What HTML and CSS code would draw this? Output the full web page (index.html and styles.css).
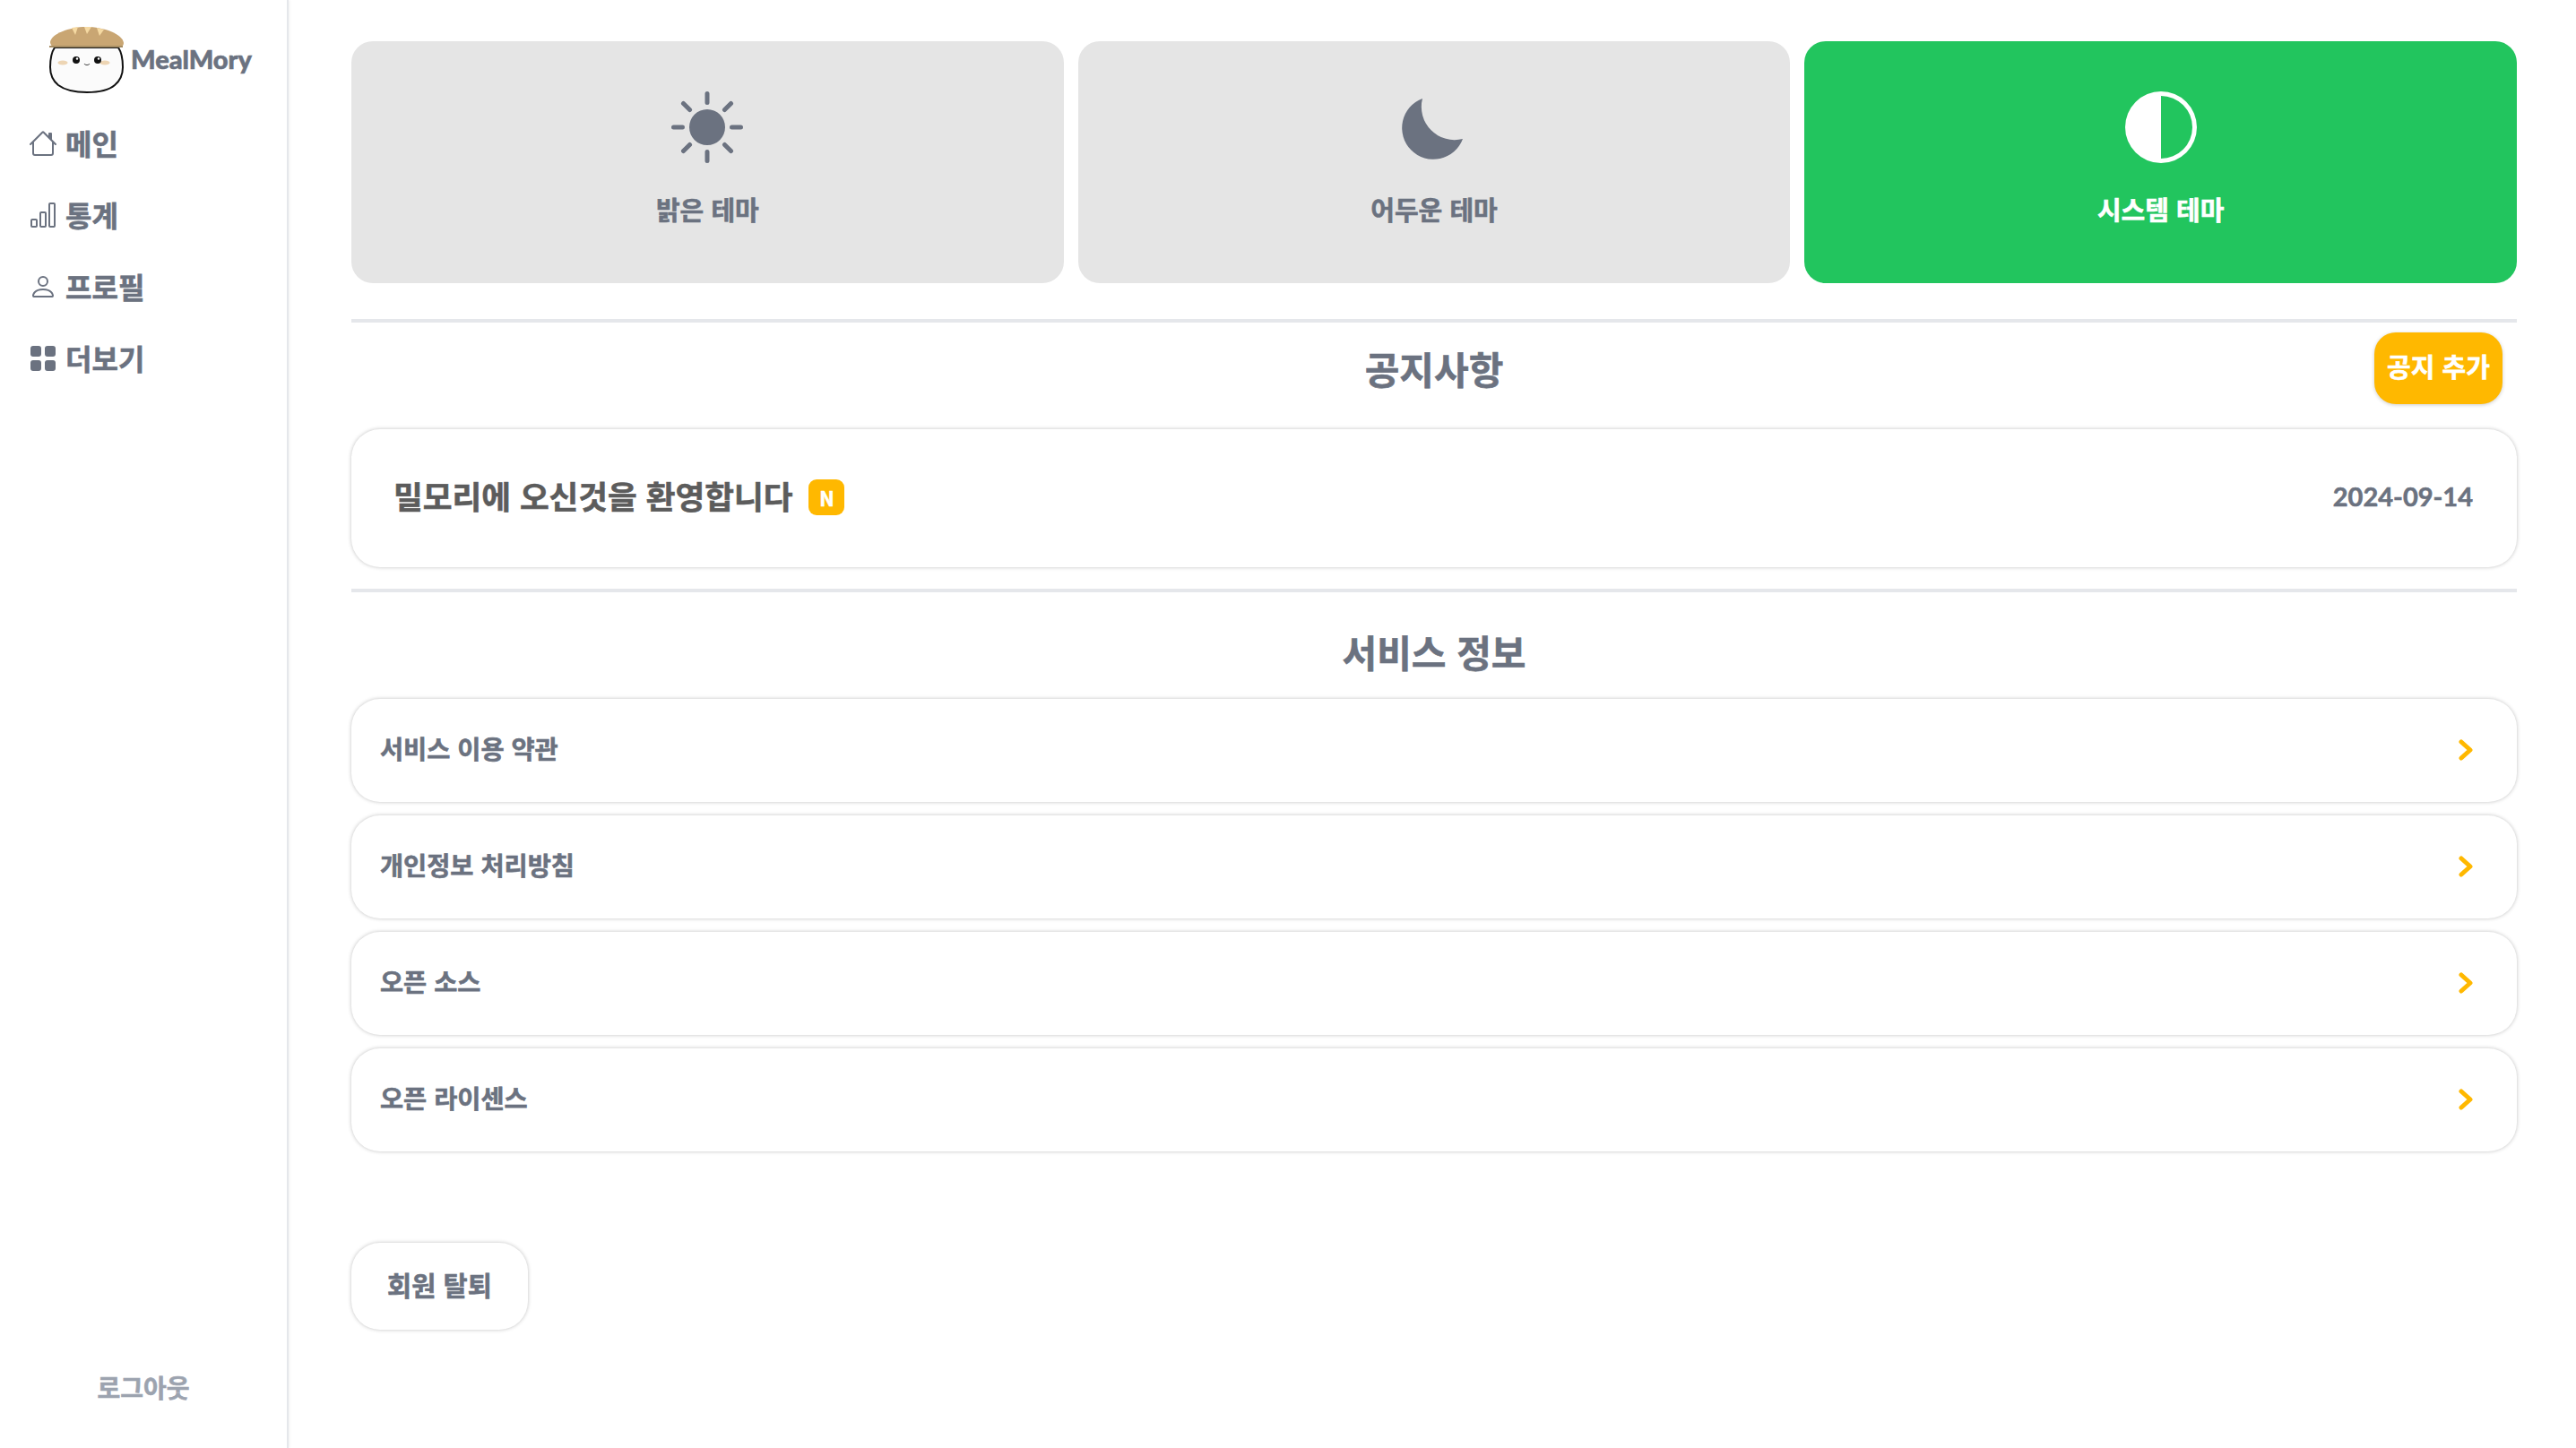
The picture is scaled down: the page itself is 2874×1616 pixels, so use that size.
FILE: index.html
```html
<!DOCTYPE html>
<html lang="ko">
<head>
    <meta charset="utf-8">
    <title>MealMory</title>
    <link rel="stylesheet" href="styles.css">
</head>
<body>
    <div class="app">
        <aside class="sidebar">
            <div class="logo">
                <svg class="logo-img" viewBox="0 0 84 76">
                    <path d="M6 24C2 30 1 36 1 46c0 8 3 15 9 20 8 6 20 8 32 8s24-2 31-8c6-5 9-12 9-20 0-10-1-16-5-22z" fill="#fbfbfb" stroke="#111" stroke-width="2"/>
                    <path d="M1 18C2 9 22 1 41 1c20 0 41 8 42 18 0 3-2 4-5 5H6c-3-1-5-3-5-6z" fill="#c9a673"/>
                    <path d="M25 2l4 8 3-9zM39 1l3 8 5-8zM53 2l3 9 5-7z" fill="#f5d9a2"/>
                    <rect x="0" y="22" width="82" height="2" fill="#a58c62"/>
                    <ellipse cx="15" cy="41" rx="5.5" ry="2.5" fill="#edd5b4"/>
                    <ellipse cx="62" cy="41" rx="5.5" ry="2.5" fill="#edd5b4"/>
                    <circle cx="30" cy="38" r="4" fill="#111"/>
                    <circle cx="54" cy="38" r="4" fill="#111"/>
                    <circle cx="31" cy="36.500" r="1.200" fill="#fff"/>
                    <circle cx="55" cy="36.500" r="1.200" fill="#fff"/>
                    <path d="M39 42c1 2 5 2 6 0" fill="none" stroke="#333" stroke-width="1"/>
                </svg>
                <span class="logo-text">MealMory</span>
            </div>
            <nav class="nav">
                <a class="nav-item">
                    <svg class="nav-icon" viewBox="0 0 16 16"><path d="M8.707 1.5a1 1 0 0 0-1.414 0L.646 8.146a.5.5 0 0 0 .708.708L2 8.207V13.5A1.5 1.5 0 0 0 3.5 15h9a1.500 1.500 0 0 0 1.500-1.500V8.207l.646.647a.5.5 0 0 0 .708-.708L13 5.793V2.500a.5.5 0 0 0-.5-.5h-1a.5.5 0 0 0-.5.5v1.293zM13 7.207V13.500a.5.5 0 0 1-.5.5h-9a.5.5 0 0 1-.5-.5V7.207l5-5z"/></svg>
                    <span class="nav-label">메인</span>
                </a>
                <a class="nav-item">
                    <svg class="nav-icon" viewBox="0 0 16 16"><path d="M4 11H2v3h2zm5-4H7v7h2zm5-5v12h-2V2zm-2-1a1 1 0 0 0-1 1v12a1 1 0 0 0 1 1h2a1 1 0 0 0 1-1V2a1 1 0 0 0-1-1zM6 7a1 1 0 0 1 1-1h2a1 1 0 0 1 1 1v7a1 1 0 0 1-1 1H7a1 1 0 0 1-1-1zm-5 4a1 1 0 0 1 1-1h2a1 1 0 0 1 1 1v3a1 1 0 0 1-1 1H2a1 1 0 0 1-1-1z"/></svg>
                    <span class="nav-label">통계</span>
                </a>
                <a class="nav-item">
                    <svg class="nav-icon" viewBox="0 0 16 16"><path d="M8 8a3 3 0 1 0 0-6 3 3 0 0 0 0 6m2-3a2 2 0 1 1-4 0 2 2 0 0 1 4 0m4 8c0 1-1 1-1 1H3s-1 0-1-1 1-4 6-4 6 3 6 4m-1-.004c-.001-.246-.154-.986-.832-1.664C11.516 10.68 10.289 10 8 10s-3.516.68-4.168 1.332c-.678.678-.83 1.418-.832 1.664z"/></svg>
                    <span class="nav-label">프로필</span>
                </a>
                <a class="nav-item">
                    <svg class="nav-icon" viewBox="0 0 16 16"><path d="M1 2.500A1.500 1.500 0 0 1 2.500 1h3A1.500 1.500 0 0 1 7 2.500v3A1.500 1.500 0 0 1 5.500 7h-3A1.500 1.500 0 0 1 1 5.500zm8 0A1.500 1.500 0 0 1 10.500 1h3A1.500 1.500 0 0 1 15 2.500v3A1.500 1.500 0 0 1 13.500 7h-3A1.500 1.500 0 0 1 9 5.500zm-8 8A1.500 1.500 0 0 1 2.500 9h3A1.500 1.500 0 0 1 7 10.500v3A1.500 1.500 0 0 1 5.500 15h-3A1.500 1.500 0 0 1 1 13.500zm8 0A1.500 1.500 0 0 1 10.500 9h3a1.500 1.500 0 0 1 1.500 1.500v3a1.500 1.500 0 0 1-1.500 1.500h-3A1.500 1.500 0 0 1 9 13.500z"/></svg>
                    <span class="nav-label">더보기</span>
                </a>
            </nav>
            <a class="logout">로그아웃</a>
        </aside>

        <main class="main">
            <section class="themes">
                <button class="theme-card">
                    <svg class="theme-icon" viewBox="0 0 16 16"><path d="M8 12a4 4 0 1 0 0-8 4 4 0 0 0 0 8M8 0a.5.5 0 0 1 .5.5v2a.5.5 0 0 1-1 0v-2A.5.5 0 0 1 8 0m0 13a.5.5 0 0 1 .5.5v2a.5.5 0 0 1-1 0v-2A.5.5 0 0 1 8 13m8-5a.5.5 0 0 1-.5.5h-2a.5.5 0 0 1 0-1h2a.5.5 0 0 1 .5.5M3 8a.5.5 0 0 1-.5.5h-2a.5.5 0 0 1 0-1h2A.5.5 0 0 1 3 8m10.657-5.657a.5.5 0 0 1 0 .707l-1.414 1.415a.5.5 0 1 1-.707-.708l1.414-1.414a.5.5 0 0 1 .707 0m-9.193 9.193a.5.5 0 0 1 0 .707L3.050 13.657a.5.5 0 0 1-.707-.707l1.414-1.414a.5.5 0 0 1 .707 0m9.193 2.121a.5.5 0 0 1-.707 0l-1.414-1.414a.5.5 0 0 1 .707-.707l1.414 1.414a.5.5 0 0 1 0 .707M4.464 4.465a.5.5 0 0 1-.707 0L2.343 3.050a.5.5 0 1 1 .707-.707l1.414 1.414a.5.5 0 0 1 0 .708"/></svg>
                    <span>밝은 테마</span>
                </button>
                <button class="theme-card">
                    <svg class="theme-icon" viewBox="0 0 80 80"><path d="M27 8A35 35 0 1 0 72 53A37 37 0 0 1 27 8Z"/></svg>
                    <span>어두운 테마</span>
                </button>
                <button class="theme-card active">
                    <svg class="theme-icon" viewBox="0 0 16 16"><path d="M8 15A7 7 0 1 0 8 1zm0 1A8 8 0 1 1 8 0a8 8 0 0 1 0 16"/></svg>
                    <span>시스템 테마</span>
                </button>
            </section>

            <hr class="divider">

            <div class="notice-head">
                <h2 class="section-title">공지사항</h2>
                <button class="add-btn"><span>공지 추가</span></button>
            </div>

            <div class="notice-card">
                <div class="notice-left">
                    <span class="notice-title">밀모리에 오신것을 환영합니다</span>
                    <span class="badge">N</span>
                </div>
                <span class="notice-date">2024-09-14</span>
            </div>

            <hr class="divider divider-second">

            <h2 class="section-title service-title">서비스 정보</h2>

            <div class="info-list">
                <div class="info-row"><span>서비스 이용 약관</span><svg class="chevron" viewBox="0 0 16 24"><path d="M3 3l10 9-10 9"/></svg></div>
                <div class="info-row"><span>개인정보 처리방침</span><svg class="chevron" viewBox="0 0 16 24"><path d="M3 3l10 9-10 9"/></svg></div>
                <div class="info-row"><span>오픈 소스</span><svg class="chevron" viewBox="0 0 16 24"><path d="M3 3l10 9-10 9"/></svg></div>
                <div class="info-row"><span>오픈 라이센스</span><svg class="chevron" viewBox="0 0 16 24"><path d="M3 3l10 9-10 9"/></svg></div>
            </div>

            <button class="leave-btn"><span>회원 탈퇴</span></button>
        </main>
    </div>
</body>
</html>
```
FILE: styles.css
```css
* {
    box-sizing: border-box;
}

body {
    margin: 0;
    background-color: #fff;
    color: #6b7280;
    font-family: "Noto Sans CJK KR", "Noto Sans", sans-serif;
    font-weight: 700;
    -webkit-text-stroke: 0.6px currentColor;
}

button {
    font: inherit;
    border: none;
}

h2 {
    margin: 0;
}

.app {
    display: flex;
    height: 1616px;
    overflow: hidden;
}

/* sidebar */
.sidebar {
    width: 322px;
    flex-shrink: 0;
    display: flex;
    flex-direction: column;
    border-right: 2px solid #e5e7eb;
    box-shadow: 1px 0 3px rgba(0, 0, 0, 0.06);
    padding-top: 29px;
}

.logo {
    display: flex;
    align-items: center;
    gap: 7px;
    padding-left: 55px;
    height: 76px;
}

.logo-img {
    width: 84px;
    height: 76px;
}

.logo-text {
    font-family: Lato, sans-serif;
    font-size: 29px;
    font-weight: 900;
    margin-bottom: 3px;
}

.nav {
    display: flex;
    flex-direction: column;
    margin-top: 15px;
}

.nav-item {
    height: 80px;
    display: flex;
    align-items: center;
    gap: 9px;
    padding-left: 32px;
    padding-bottom: 1px;
    font-size: 32px;
}

.nav-label {
    margin-bottom: 2px;
}

.nav-icon {
    width: 32px;
    height: 32px;
    fill: #6b7280;
    stroke: none;
}

.logout {
    margin-top: auto;
    margin-bottom: 46px;
    text-align: center;
    font-size: 28px;
    line-height: 44px;
    color: #9ca3af;
}

/* main */
.main {
    flex: 1;
    padding: 46px 66px 0 70px;
}

.themes {
    display: grid;
    grid-template-columns: repeat(3, 1fr);
    gap: 16px;
}

.theme-card {
    height: 270px;
    background-color: #e5e5e5;
    color: #6b7280;
    border-radius: 24px;
    display: flex;
    flex-direction: column;
    align-items: center;
    padding-top: 56px;
    font-size: 29px;
}

.theme-card span {
    margin-top: 29px;
    line-height: 44px;
}

.theme-card.active {
    background-color: #22c55e;
    color: #fff;
}

.theme-icon {
    width: 80px;
    height: 80px;
    fill: currentColor;
    stroke: none;
}

.divider {
    border: none;
    height: 4px;
    margin: 40px 0 0;
    background-color: #e5e7eb;
}

.divider-second {
    margin-top: 24px;
}

.section-title {
    font-size: 42px;
    line-height: 60px;
    text-align: center;
}

.notice-head {
    display: grid;
    grid-template-columns: 1fr auto 1fr;
    align-items: center;
    padding: 11px 16px 0;
}

.notice-head .section-title {
    grid-column: 2;
}

.add-btn {
    justify-self: end;
    width: 143px;
    height: 80px;
    border-radius: 24px;
    background-color: #ffb800;
    color: #fff;
    font-size: 29px;
    padding: 0 0 6px;
    box-shadow: 0 1px 4px rgba(0, 0, 0, 0.2);
}

.notice-card {
    margin-top: 28px;
    height: 154px;
    display: flex;
    align-items: center;
    justify-content: space-between;
    padding: 0 49px 6px 47px;
    background-color: #fff;
    border-radius: 32px;
    box-shadow: 0 0 4px rgba(0, 0, 0, 0.25);
}

.notice-left {
    display: flex;
    align-items: center;
    gap: 18px;
}

.notice-title {
    font-size: 35.6px;
    color: #5c5c5c;
    margin-bottom: 2px;
}

.badge {
    width: 40px;
    height: 40px;
    margin-top: 3px;
    border-radius: 9px;
    background-color: #ffb800;
    color: #fff;
    font-size: 22px;
    display: flex;
    align-items: center;
    justify-content: center;
}

.notice-date {
    font-family: Lato, sans-serif;
    font-size: 29px;
    font-weight: 700;
}

.service-title {
    margin-top: 36px;
}

.info-list {
    margin-top: 23px;
    display: flex;
    flex-direction: column;
    gap: 15px;
}

.info-row {
    height: 115px;
    display: flex;
    align-items: center;
    justify-content: space-between;
    padding: 0 49px 0 32px;
    font-size: 28.4px;
    background-color: #fff;
    border-radius: 32px;
    box-shadow: 0 0 4px rgba(0, 0, 0, 0.25);
}

.info-row span {
    margin-bottom: 6px;
}

.chevron {
    width: 16px;
    height: 24px;
    margin-bottom: 1px;
    fill: none;
    stroke: #ffb800;
    stroke-width: 5;
    stroke-linecap: round;
    stroke-linejoin: round;
}

.leave-btn {
    display: block;
    margin-top: 102px;
    width: 197px;
    height: 97px;
    padding: 0 0 6px;
    border-radius: 32px;
    background-color: #fff;
    color: #6b7280;
    font-size: 29.5px;
    box-shadow: 0 0 4px rgba(0, 0, 0, 0.25);
}
```
